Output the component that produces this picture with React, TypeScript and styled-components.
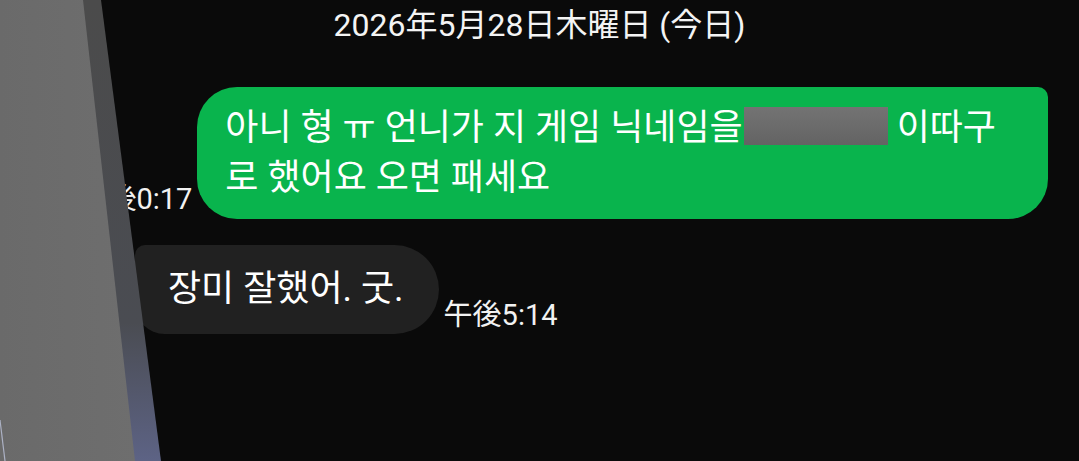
import React from "react";
import styled, { createGlobalStyle } from "styled-components";

const Global = createGlobalStyle`
  html, body { margin: 0; padding: 0; background: #0a0a0a; }
  body { width: 1079px; height: 461px; overflow: hidden; }
  #root { height: 461px; }
`;

const Screen = styled.div`
  position: relative;
  width: 1079px;
  height: 461px;
  overflow: hidden;
  background: #0a0a0a;
  color: #ffffff;
  font-family: "Roboto", "Noto Sans CJK KR", "Noto Sans CJK JP", sans-serif;
  display: flex;
  flex-direction: column;
`;

const DateHeader = styled.div`
  font-family: "Roboto", "Noto Sans CJK JP", sans-serif;
  font-size: 32px;
  line-height: 40px;
  text-align: center;
  padding-top: 5px;
  color: #f4f4f4;
`;

const Row = styled.div<{ $mine?: boolean }>`
  display: flex;
  align-items: flex-end;
  justify-content: ${(p) => (p.$mine ? "flex-end" : "flex-start")};
  gap: 5px;
  padding: ${(p) => (p.$mine ? "0 31px 0 0" : "0 0 0 135px")};
  margin-top: ${(p) => (p.$mine ? "42px" : "26px")};
`;

const Bubble = styled.div<{ $mine?: boolean }>`
  font-size: 36px;
  line-height: 50px;
  white-space: nowrap;
  color: #ffffff;
  background: ${(p) => (p.$mine ? "#09b44d" : "#212121")};
  padding: ${(p) => (p.$mine ? "16px 52px 16px 28px" : "19px 35px 20px 33px")};
  border-radius: ${(p) => (p.$mine ? "40px 10px 40px 40px" : "10px 45px 45px 30px")};
`;

const Time = styled.div<{ $mine?: boolean }>`
  font-family: "Roboto", "Noto Sans CJK JP", sans-serif;
  font-size: 29px;
  line-height: 34px;
  color: #f2f2f2;
  white-space: nowrap;
  margin-bottom: ${(p) => (p.$mine ? "3px" : "2px")};
`;

const Redacted = styled.span`
  display: inline-block;
  width: 144px;
  height: 38px;
  margin: 0 9px 0 1px;
  vertical-align: -5px;
  background: linear-gradient(180deg, #737373 0%, #6a6a6a 60%, #636363 100%);
`;

const Slab = styled.svg`
  position: absolute;
  left: 0;
  top: 0;
  width: 170px;
  height: 461px;
  pointer-events: none;
`;

export default function App() {
  return (
    <Screen>
      <Global />
      <DateHeader>2026年5月28日木曜日 (今日)</DateHeader>
      <Row $mine>
        <Time $mine>午後0:17</Time>
        <Bubble $mine>
          아니 형 ㅠ 언니가 지 게임 닉네임을<Redacted />이따구
          <br />
          로 했어요 오면 패세요
        </Bubble>
      </Row>
      <Row>
        <Bubble>장미 잘했어. 굿.</Bubble>
        <Time>午後5:14</Time>
      </Row>
      <Slab viewBox="0 0 170 461">
        <defs>
          <linearGradient id="band" x1="0" y1="0" x2="0" y2="1">
            <stop offset="0" stopColor="#4b4b4b" />
            <stop offset="0.7" stopColor="#4a4c52" />
            <stop offset="1" stopColor="#5d6385" />
          </linearGradient>
          <linearGradient id="face" x1="0" y1="0" x2="1" y2="0">
            <stop offset="0" stopColor="#6a6a6a" />
            <stop offset="1" stopColor="#6e6e6e" />
          </linearGradient>
        </defs>
        <polygon points="82,0 101,0 161,461 134,461" fill="url(#band)" />
        <polygon points="0,0 83,0 135,461 0,461" fill="url(#face)" />
        <line x1="0" y1="420" x2="5" y2="461" stroke="#c8d0ea" strokeWidth="1.2" opacity="0.7" />
      </Slab>
    </Screen>
  );
}
